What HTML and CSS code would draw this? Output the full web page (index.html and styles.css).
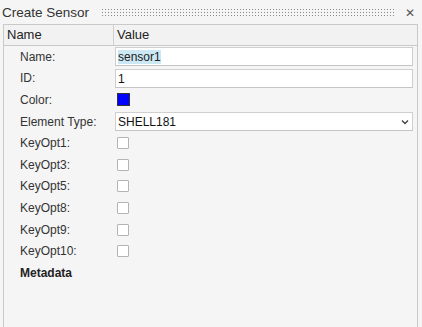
FILE: index.html
```html
<!DOCTYPE html>
<html lang="en">
<head>
  <meta charset="UTF-8">
  <title>Create Sensor</title>
  <link rel="stylesheet" href="styles.css">
</head>
<body>
  <div class="titlebar">
    <span class="title">Create Sensor</span>
    <span class="grip"></span>
    <span class="close">&#x2715;</span>
  </div>
  <div class="panel">
    <div class="head">
      <div class="hcell">Name</div>
      <div class="hcell val">Value</div>
    </div>
    <div class="row">
      <span class="label">Name:</span>
      <div class="field"><span class="sel">sensor1</span></div>
    </div>
    <div class="row">
      <span class="label">ID:</span>
      <div class="field">1</div>
    </div>
    <div class="row">
      <span class="label">Color:</span>
      <span class="swatch"></span>
    </div>
    <div class="row">
      <span class="label">Element Type:</span>
      <div class="field select">SHELL181
        <svg class="arrow" width="8" height="6" viewBox="0 0 8 6"><path d="M1 1.5l3 3 3-3" fill="none" stroke="#444" stroke-width="1.4"/></svg>
      </div>
    </div>
    <div class="row"><span class="label">KeyOpt1:</span><span class="check"></span></div>
    <div class="row"><span class="label">KeyOpt3:</span><span class="check"></span></div>
    <div class="row"><span class="label">KeyOpt5:</span><span class="check"></span></div>
    <div class="row"><span class="label">KeyOpt8:</span><span class="check"></span></div>
    <div class="row"><span class="label">KeyOpt9:</span><span class="check"></span></div>
    <div class="row"><span class="label">KeyOpt10:</span><span class="check"></span></div>
    <div class="row"><span class="label group">Metadata</span></div>
  </div>
</body>
</html>
```

FILE: styles.css
```css
* { box-sizing: border-box; margin: 0; padding: 0; }
body {
  font-family: 'Liberation Sans', Arial, sans-serif;
  background: #f5f5f5;
  color: #333;
  overflow: hidden;
}
.titlebar {
  display: flex;
  align-items: center;
  height: 24px;
  padding: 1px 7px 0 2px;
}
.title { font-size: 13.5px; color: #333; }
.grip {
  flex: 1;
  height: 9px;
  margin: 0 10px 0 12px;
  background-image: radial-gradient(circle, #8a8a8a 0.8px, transparent 1px);
  background-size: 3px 3px;
}
.close { font-size: 12px; color: #555; }
.panel {
  margin-left: 3px;
  width: 415px;
  height: 303px;
  border: 1px solid #c9c9c9;
  border-bottom: none;
  background: #f5f5f5;
}
.head {
  display: grid;
  grid-template-columns: 109px 1fr;
  height: 21px;
  border-bottom: 1px solid #c9c9c9;
  background: #f2f2f2;
  font-size: 13px;
  color: #222;
}
.hcell { padding: 2px 0 0 3px; }
.hcell.val { border-left: 1px solid #d0d0d0; }
.row {
  display: grid;
  grid-template-columns: 111px 1fr;
  align-items: center;
  height: 21.6px;
  padding-right: 4px;
  font-size: 12px;
}
.label { padding-left: 16px; color: #333; }
.label.group { font-weight: bold; color: #222; padding-left: 16px; }
.field {
  position: relative;
  height: 19px;
  background: #fff;
  border: 1px solid #cfcfcf;
  border-bottom-color: #c4c4c4;
  padding: 2px 0 0 2px;
  font-size: 12px;
  color: #111;
}
.sel { background: #cce8f4; color: #222; }
.select .arrow { position: absolute; right: 3px; top: 6px; }
.swatch {
  width: 13px;
  height: 13px;
  margin-left: 2px;
  background: #0000ff;
  border: 1px solid #333;
}
.check {
  width: 12px;
  height: 12px;
  margin-left: 2px;
  background: #fff;
  border: 1px solid #b4b4b4;
  border-radius: 1px;
}
```
